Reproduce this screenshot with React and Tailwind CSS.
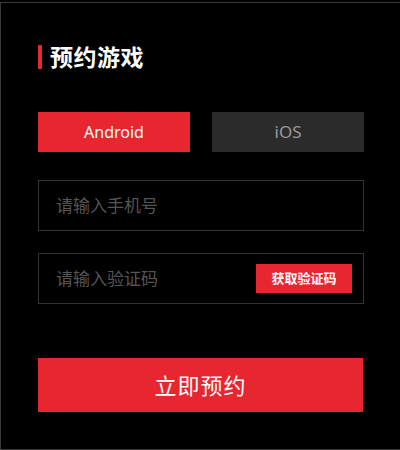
import React, { useState } from "react";

const App = () => {
  const [platform, setPlatform] = useState("android");

  return (
    <div
      className="w-[400px] h-[450px] bg-black pt-[2px]"
      style={{ fontFamily: '"Noto Sans", "Noto Sans CJK SC", sans-serif' }}
    >
      <div className="h-[448px] border-t border-l border-b border-[#3a3a3a] pl-[37px] pt-[42px]">
        {/* title */}
        <div className="flex items-center h-[24px]">
          <span className="w-[4px] h-[24px] bg-[#e8262f]" />
          <h2 className="ml-[8px] text-[23px] leading-none font-bold text-white tracking-[0.5px]">
            预约游戏
          </h2>
        </div>

        {/* platform tabs */}
        <div className="mt-[43px] w-[326px] flex justify-between">
          <button
            onClick={() => setPlatform("android")}
            className={`w-[152px] h-[40px] text-[16px] ${
              platform === "android" ? "bg-[#e8262f] text-white" : "bg-[#2b2b2b] text-[#999]"
            }`}
          >
            Android
          </button>
          <button
            onClick={() => setPlatform("ios")}
            className={`w-[152px] h-[40px] text-[17px] ${
              platform === "ios" ? "bg-[#e8262f] text-white" : "bg-[#2b2b2b] text-[#999]"
            }`}
          >
            iOS
          </button>
        </div>

        {/* phone */}
        <div className="mt-[28px] w-[326px] h-[51px] border border-[#333] flex items-center px-[17px]">
          <input
            placeholder="请输入手机号"
            className="w-full bg-transparent outline-none text-[17px] text-white placeholder:text-[#555]"
          />
        </div>

        {/* code */}
        <div className="mt-[22px] w-[326px] h-[51px] border border-[#333] flex items-center pl-[17px] pr-[11px]">
          <input
            placeholder="请输入验证码"
            className="flex-1 min-w-0 bg-transparent outline-none text-[17px] text-white placeholder:text-[#555]"
          />
          <button className="w-[96px] h-[29px] bg-[#e8262f] text-white text-[13px] font-bold">
            获取验证码
          </button>
        </div>

        {/* submit */}
        <button className="mt-[54px] w-[325px] h-[54px] bg-[#e8262f] text-white text-[22px] tracking-[1px]">
          立即预约
        </button>
      </div>
    </div>
  );
};

export default App;
